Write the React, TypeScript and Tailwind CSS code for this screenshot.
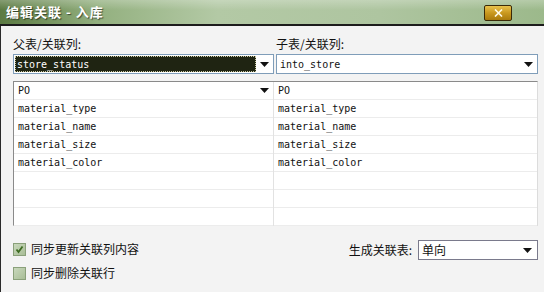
import React from "react";

const cjk = { fontFamily: '"SimSun","Noto Sans CJK SC",sans-serif' };
const mono = { fontFamily: '"DejaVu Sans Mono","Liberation Mono",monospace' };

function Arrow() {
  return (
    <svg width="9" height="5" viewBox="0 0 9 5" className="shrink-0">
      <path d="M0 0h9L4.5 5z" fill="#111" />
    </svg>
  );
}

const leftRows = ["PO", "material_type", "material_name", "material_size", "material_color", "", "", ""];
const rightRows = ["PO", "material_type", "material_name", "material_size", "material_color", "", "", ""];

export default function App() {
  return (
    <div className="w-[544px] h-[292px] overflow-hidden bg-[#f3f3f3] flex flex-col select-none">
      <div className="h-[24px] shrink-0 flex items-center justify-between pl-[6px] pr-[32px] bg-[linear-gradient(90deg,#5b7a42_0%,#93b07f_18%,#b3c9a5_40%,#aec5a0_70%,#9cb98b_100%)] relative">
        <div className="absolute inset-x-0 top-0 h-[10px] bg-[linear-gradient(180deg,rgba(255,255,255,0.25),rgba(255,255,255,0))]" />
        <span
          className="relative text-white font-bold text-[13px] tracking-[1px] [text-shadow:1px_1px_1px_rgba(0,0,0,0.55)]"
          style={cjk}
        >
          编辑关联 - 入库
        </span>
        <div className="relative w-[28px] h-[16px] mt-[1px] rounded-[2px] border border-[#3a2a08] bg-[linear-gradient(180deg,#e9c24c_0%,#c9981e_50%,#a97a0c_100%)] flex items-center justify-center">
          <svg width="9" height="8" viewBox="0 0 9 8">
            <path d="M1 0.5L8 7.5M8 0.5L1 7.5" stroke="#fffbe8" strokeWidth="1.6" />
          </svg>
        </div>
      </div>
      <div className="h-[2px] bg-[#1c1c1c] shrink-0" />
      <div className="flex-1 flex flex-col border-l border-[#2a2a2a] pl-[12px] pr-[6px] pt-[10px] text-[12px] text-[#111]" style={cjk}>
        <div className="grid grid-cols-[261px_262px] gap-x-[2px]">
          <div className="h-[16px] leading-[16px]">父表/关联列:</div>
          <div className="h-[16px] leading-[16px]">子表/关联列:</div>
          <div className="mt-[2px] h-[20px] border border-[#7f9db9] bg-white flex items-center p-[1px]">
            <div className="flex-1 h-full bg-[#1f2412] outline-1 outline-dotted outline-[#c8c8a0] -outline-offset-1 flex items-center pl-[2px] text-white text-[10px]" style={mono}>
              store_status
            </div>
            <div className="w-[16px] h-full flex items-center justify-center">
              <Arrow />
            </div>
          </div>
          <div className="mt-[2px] h-[20px] border border-[#7f9db9] bg-white flex items-center pl-[3px] pr-[4px] justify-between">
            <span className="text-[10px]" style={mono}>into_store</span>
            <Arrow />
          </div>
        </div>
        <div className="mt-[7px] h-[145px] border-t border-l border-[#8a8a8a] border-r border-r-[#dcdcdc] border-b border-b-[#e0e0e0] bg-white grid grid-cols-[260px_1fr]">
          <div className="border-r border-[#e2e2e2]">
            {leftRows.map((r, i) => (
              <div key={i} className="h-[18px] border-b border-[#ececec] flex items-center justify-between pl-[4px] pr-[4px] text-[10px]" style={mono}>
                <span>{r}</span>
                {i === 0 && <Arrow />}
              </div>
            ))}
          </div>
          <div>
            {rightRows.map((r, i) => (
              <div key={i} className="h-[18px] border-b border-[#ececec] flex items-center pl-[4px] text-[10px]" style={mono}>
                {r}
              </div>
            ))}
          </div>
        </div>
        <div className="mt-[16px] flex items-start justify-between">
          <div className="flex flex-col gap-[10px]">
            <div className="flex items-center gap-[5px] h-[14px]">
              <div className="w-[13px] h-[13px] border border-[#8aa07a] bg-[linear-gradient(135deg,#c9d8bc,#a8bd96)] flex items-center justify-center">
                <svg width="9" height="9" viewBox="0 0 9 9">
                  <path d="M1.5 4.5L3.5 7L7.5 1.5" stroke="#3d6b22" strokeWidth="1.8" fill="none" />
                </svg>
              </div>
              <span>同步更新关联列内容</span>
            </div>
            <div className="flex items-center gap-[5px] h-[14px]">
              <div className="w-[13px] h-[13px] border border-[#8aa07a] bg-[linear-gradient(135deg,#c9d8bc,#a8bd96)]" />
              <span>同步删除关联行</span>
            </div>
          </div>
          <div className="flex items-center gap-[6px] -mt-[2px]">
            <span>生成关联表:</span>
            <div className="w-[120px] h-[20px] border border-[#7a7a8c] bg-white flex items-center justify-between pl-[3px] pr-[5px]">
              <span>单向</span>
              <Arrow />
            </div>
          </div>
        </div>
      </div>
    </div>
  );
}
